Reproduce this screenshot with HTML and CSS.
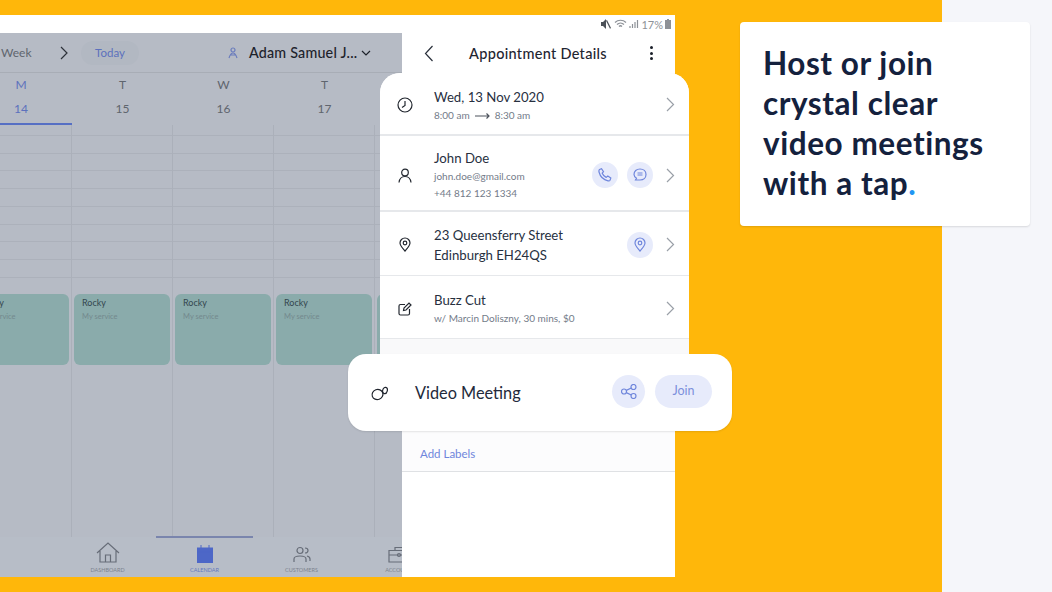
FILE: index.html
```html
<!DOCTYPE html>
<html lang="en">
<head>
<meta charset="utf-8">
<title>Host or join crystal clear video meetings</title>
<link rel="stylesheet" href="styles.css">
</head>
<body>
<div class="stage">
  <main class="phone">
    <section class="calendar">
      <header class="cal-bar">
        <span class="view">Week</span>
        <svg class="next" width="10" height="14" viewBox="0 0 10 14"><path d="M2 1l6 6-6 6"/></svg>
        <span class="today">Today</span>
        <svg class="staff-icon" width="10" height="12" viewBox="0 0 10 12"><circle cx="5" cy="3" r="2"/><path d="M1 11c1-3 2-5 4-5s3 2 4 5M3 8h4"/></svg>
        <span class="staff">Adam Samuel J...</span>
        <svg class="caret" width="10" height="6" viewBox="0 0 10 6"><path d="M1 1l4 4 4-4"/></svg>
      </header>
      <div class="days">
        <div class="day first active"><span>M</span><b>14</b></div>
        <div class="day"><span>T</span><b>15</b></div>
        <div class="day"><span>W</span><b>16</b></div>
        <div class="day"><span>T</span><b>17</b></div>
      </div>
      <div class="grid">
        <div class="col first"><div class="event"><strong>Rocky</strong><small>My service</small></div></div>
        <div class="col"><div class="event"><strong>Rocky</strong><small>My service</small></div></div>
        <div class="col"><div class="event"><strong>Rocky</strong><small>My service</small></div></div>
        <div class="col"><div class="event"><strong>Rocky</strong><small>My service</small></div></div>
        <div class="col last"><div class="event"></div></div>
      </div>
      <nav class="tabs">
        <div class="tab">
          <svg width="24" height="21" viewBox="0 0 24 21"><path d="M1 11L12 1l11 10M4 9v11h16V9M9.500 20v-7h5v7"/></svg>
          <span>DASHBOARD</span>
        </div>
        <div class="tab current">
          <svg width="18" height="18" viewBox="0 0 18 18"><path class="solid" d="M1 2.500h16V18H1z"/><path class="gap" d="M1 7h16M5 0v3M13 0v3"/></svg>
          <span>CALENDAR</span>
        </div>
        <div class="tab">
          <svg width="18" height="17" viewBox="0 0 18 17"><circle cx="7" cy="4.500" r="3"/><path d="M1 16v-3c0-2 2-3 6-3s6 1 6 3v3M12 2c2 0 3 1 3 2.500S14 7 12 7M14 10c2 .5 3 1.500 3 3v2"/></svg>
          <span>CUSTOMERS</span>
        </div>
        <div class="tab">
          <svg width="22" height="17" viewBox="0 0 22 17"><path d="M1 4.500h20V16H1zM7 4.500V1.500h8v3M1 9h20"/><circle cx="11" cy="9" r="1.500"/></svg>
          <span>ACCOUNT</span>
        </div>
      </nav>
    </section>

    <section class="sheet">
      <div class="status">
        <svg class="mute" width="12" height="10" viewBox="0 0 12 10"><path class="fill" d="M1 3h2l3-3v10L3 7H1zM7 1l4 8-1 .8-4-8z"/></svg>
        <svg width="13" height="10" viewBox="0 0 13 10"><path d="M1 3.500c3-3 8-3 11 0M3 5.500c2-2 5-2 7 0M5 7.500c1-1 2-1 3 0"/></svg>
        <svg width="10" height="10" viewBox="0 0 10 10"><path d="M1 9V7M3.500 9V5M6 9V3M8.500 9V1"/></svg>
        <span>17%</span>
        <svg width="6" height="10" viewBox="0 0 6 10"><path class="fill" d="M2 0h2v1h2v9H0V1h2z"/></svg>
      </div>
      <header class="sheet-bar">
        <svg class="back" width="10" height="17" viewBox="0 0 10 17"><path d="M8.500 1L1.500 8.500l7 7.500"/></svg>
        <h1>Appointment Details</h1>
        <div class="dots"><i></i><i></i><i></i></div>
      </header>
      <div class="spacer"></div>
      <div class="labels"><a>Add Labels</a></div>
    </section>
  </main>

  <section class="details">
    <div class="row r1">
      <svg class="lead" width="16" height="16" viewBox="0 0 16 16"><circle cx="8" cy="8" r="7"/><path d="M8 4v4.500l-3 2"/></svg>
      <div class="text">
        <p class="main">Wed, 13 Nov 2020</p>
        <p class="sub">8:00 am <svg class="arrow" width="15" height="6" viewBox="0 0 15 6"><path d="M0 3h14M11.500 .5L14 3l-2.500 2.500"/></svg> 8:30 am</p>
      </div>
      <svg class="chev" width="9" height="15" viewBox="0 0 9 15"><path d="M1 1l6.500 6.500L1 14"/></svg>
    </div>
    <div class="row r2">
      <svg class="lead" width="14" height="15" viewBox="0 0 14 15"><circle cx="7" cy="4.500" r="3.300"/><path d="M1 14.500c.5-4 2.500-6 6-6s5.500 2 6 6"/></svg>
      <div class="text">
        <p class="main">John Doe</p>
        <p class="sub">john.doe@gmail.com</p>
        <p class="sub">+44 812 123 1334</p>
      </div>
      <span class="round"><svg width="14" height="14" viewBox="0 0 14 14"><path d="M1.500 1.500l2-.8 2 3-1.300 1.500c.8 1.800 2.300 3.300 4 4.200l1.600-1.300 3 2-.8 2.100c-.4.700-1.300.8-2 .6C5 11.700 2.300 9 1 4c-.2-1 0-2 .5-2.500z"/></svg></span>
      <span class="round"><svg width="14" height="14" viewBox="0 0 14 14"><path d="M7 1c3.500 0 6 2.300 6 5.500S10.500 12 7 12H2.500l1-1.800C2 9.200 1 8 1 6.500 1 3.300 3.500 1 7 1z"/><path d="M4.500 5h5M4.500 7h5"/></svg></span>
      <svg class="chev" width="9" height="15" viewBox="0 0 9 15"><path d="M1 1l6.500 6.500L1 14"/></svg>
    </div>
    <div class="row r3">
      <svg class="lead" width="12" height="15" viewBox="0 0 12 15"><path d="M6 14C3 10.500 1 8.500 1 6a5 5 0 0110 0c0 2.500-2 4.500-5 8z"/><circle cx="6" cy="6" r="1.800"/></svg>
      <div class="text">
        <p class="main">23 Queensferry Street</p>
        <p class="main">Edinburgh EH24QS</p>
      </div>
      <span class="round"><svg width="12" height="15" viewBox="0 0 12 15"><path d="M6 14C3 10.500 1 8.500 1 6a5 5 0 0110 0c0 2.500-2 4.500-5 8z"/><circle cx="6" cy="6" r="1.800"/></svg></span>
      <svg class="chev" width="9" height="15" viewBox="0 0 9 15"><path d="M1 1l6.500 6.500L1 14"/></svg>
    </div>
    <div class="row r4">
      <svg class="lead" width="14" height="14" viewBox="0 0 14 14"><path d="M7 2.500H2.500A1.500 1.500 0 001 4v7.500A1.500 1.500 0 002.500 13H10a1.500 1.500 0 001.500-1.500V7M5.500 8.500l.5-2.500L11 1l2 2-5 5z"/></svg>
      <div class="text">
        <p class="main">Buzz Cut</p>
        <p class="sub">w/ Marcin Doliszny, 30 mins, $0</p>
      </div>
      <svg class="chev" width="9" height="15" viewBox="0 0 9 15"><path d="M1 1l6.500 6.500L1 14"/></svg>
    </div>
  </section>

  <section class="video">
    <svg class="video-icon" width="18" height="16" viewBox="0 0 18 16"><ellipse cx="7.500" cy="9.500" rx="5.500" ry="5" transform="rotate(-20 7.500 9.500)"/><ellipse cx="15" cy="5.500" rx="2.300" ry="3.200" transform="rotate(15 15 5.500)"/></svg>
    <span class="video-title">Video Meeting</span>
    <span class="round big"><svg width="16" height="15" viewBox="0 0 16 15"><circle cx="3" cy="7.500" r="2.500"/><circle cx="12.500" cy="3" r="2.500"/><circle cx="12.500" cy="12" r="2.500"/><path d="M5.300 6.400l5-2.400M5.300 8.600l5 2.400"/></svg></span>
    <span class="join">Join</span>
  </section>

  <aside class="promo">
    <h2>Host or join<br>crystal clear<br>video meetings<br>with a tap<em>.</em></h2>
  </aside>
</div>
</body>
</html>
```

FILE: styles.css
```css
* { box-sizing: border-box; margin: 0; padding: 0; }
html, body { width: 1052px; height: 592px; overflow: hidden; }
body { font-family: "Lato", "Liberation Sans", sans-serif; background: #ffb70a; }
svg { display: block; fill: none; stroke: currentColor; stroke-width: 1.2; flex: none; }
svg .fill { fill: currentColor; stroke: none; }

.stage {
  position: relative;
  width: 1052px;
  height: 592px;
  padding-top: 15px;
  background: linear-gradient(to right, #ffb70a 942px, #f5f6fa 942px);
  overflow: hidden;
}

/* Phone */
.phone { display: flex; width: 675px; height: 562px; }
.calendar {
  width: 402px;
  display: flex;
  flex-direction: column;
  background: #b6bbc5;
  border-top: 18px solid #fff;
  overflow: hidden;
}
.cal-bar {
  height: 40px;
  flex: none;
  display: flex;
  align-items: center;
  border-bottom: 1px solid #a8adb6;
  color: #5d636c;
  font-size: 13px;
}
.view { margin-left: 1px; width: 58px; font-size: 12px; color: #5f656e; }
.next { color: #2d323a; }
.today {
  margin-left: 12px;
  width: 58px;
  height: 24px;
  border-radius: 12px;
  background: #b2b8c2;
  color: #5c71bd;
  text-align: center;
  line-height: 24px;
  font-size: 11.500px;
}
.staff-icon { margin-left: 89px; color: #6a7cbd; }
.staff { margin-left: 11px; font-size: 14.300px; font-weight: 500; color: #1d222b; white-space: nowrap; letter-spacing: .2px; }
.caret { margin-left: 4px; color: #1d222b; }

.days { height: 52px; flex: none; display: flex; margin-left: -30px; }
.day {
  width: 101px;
  display: flex;
  flex-direction: column;
  align-items: center;
  color: #5f656e;
  font-size: 12px;
}
.day span { height: 24px; line-height: 24px; }
.day b { font-weight: 400; line-height: 24px; }
.day.active { color: #5c71bd; border-bottom: 2px solid #566fc4; }
.day.first { width: 102px; }

.grid { height: 412px; flex: none; display: flex; }
.col {
  width: 101px;
  flex: none;
  padding-top: 169px;
  border-right: 1px solid #abb0ba;
  background: repeating-linear-gradient(to bottom, transparent 0, transparent 16.700px, #acb1bb 16.700px, #acb1bb 17.700px) 0 -6.700px / 100% 169px no-repeat;
}
.col.first { width: 72px; }
.col.last { border-right: 0; flex: 1; }
.event {
  height: 71px;
  margin: 0 2px;
  padding: 2px 8px;
  border-radius: 6px;
  background: #8aabab;
  display: flex;
  flex-direction: column;
  overflow: hidden;
}
.col.first .event { margin-left: -28px; }
.col.last .event { margin-right: -10px; }
.event strong { font-weight: 400; font-size: 9px; line-height: 14px; color: #33464e; white-space: nowrap; }
.event small { font-size: 7.500px; line-height: 13px; color: #73898d; white-space: nowrap; }

.tabs {
  flex: 1;
  display: flex;
  margin-left: -36px;
  background: #b7bdc7;
}
.tab {
  width: 97px;
  flex: none;
  display: flex;
  flex-direction: column;
  align-items: center;
  justify-content: flex-end;
  color: #676d78;
  padding-bottom: 2px;
}
.tab:first-child { margin-left: 95px; }
.tab span { font-size: 5.500px; line-height: 9px; margin-top: 3px; white-space: nowrap; color: #7d838e; }
.tab.current { border-top: 2px solid #7a85ad; margin-top: -1px; color: #4d67c7; }
.tab.current span { color: #6478bd; }
.tab.current svg .solid { fill: #4d67c7; stroke: none; }
.tab.current svg .gap { stroke: #4d67c7; stroke-width: 1; }

/* Sheet */
.sheet { width: 273px; display: flex; flex-direction: column; background: #fff; }
.status {
  height: 18px;
  flex: none;
  display: flex;
  align-items: center;
  justify-content: flex-end;
  gap: 2px;
  padding-right: 4px;
  color: #8d9197;
  font-size: 11px;
}
.status .mute { color: #4c5158; }
.sheet-bar {
  height: 40px;
  flex: none;
  display: flex;
  align-items: center;
  padding: 0 22px;
  color: #1f2531;
}
.sheet-bar h1 { font-size: 14.500px; font-weight: 500; flex: 1; text-align: center; letter-spacing: .3px; padding-right: 8px; }
.back { color: #2a303b; }
.dots { display: flex; flex-direction: column; gap: 2.500px; }
.dots i { display: block; width: 3px; height: 3px; border-radius: 50%; background: #1a1f29; }
.spacer { flex: none; height: 358px; background: #fafafb; }
.labels {
  height: 41px;
  padding: 4px 18px 0;
  display: flex;
  align-items: center;
  border-bottom: 1px solid #dfe1e4;
  background: #fcfcfd;
  color: #6f86dc;
  font-size: 11.500px;
}

/* Overlay: detail card */
.details {
  position: absolute;
  left: 380px;
  top: 73px;
  width: 309px;
  height: 295px;
  border-radius: 20px 20px 0 0;
  background: #f9f9fa;
  overflow: hidden;
}
.row {
  display: flex;
  align-items: center;
  padding: 0 12px 0 17px;
  border-bottom: 1px solid #e6e8eb;
  background: #fff;
  color: #20263a;
}
.r1 { height: 63px; padding-top: 2px; border-bottom-width: 2px; }
.r1 .text { padding-top: 2px; }
.r2 { height: 76px; padding-top: 4px; border-bottom-width: 2px; }
.r3 { height: 64px; padding-top: 2px; }
.r4 { height: 63px; padding-top: 3px; }
.lead { margin-right: 21px; color: #22272f; }
.r2 .lead { margin-left: 1px; margin-right: 22px; }
.r3 .lead { margin-left: 2px; margin-right: 23px; }
.r4 .lead { margin-left: 1px; margin-right: 22px; }
.text { flex: 1; }
.main { font-size: 13.200px; line-height: 20px; color: #27303f; }
.sub {
  font-size: 10px;
  line-height: 17px;
  color: #737b89;
  display: flex;
  align-items: center;
  gap: 5px;
  white-space: nowrap;
}
.arrow { color: #4d535c; }
.chev { color: #9aa0a8; margin-left: 13px; margin-right: 2px; }
.round {
  width: 26px;
  height: 26px;
  border-radius: 50%;
  background: #e7ebfb;
  color: #6f86dc;
  display: flex;
  align-items: center;
  justify-content: center;
  margin-left: 9px;
  flex: none;
}

/* Overlay: video card */
.video {
  position: absolute;
  left: 348px;
  top: 354px;
  width: 384px;
  height: 77px;
  border-radius: 18px;
  background: #fff;
  box-shadow: 0 1px 2px rgba(0,0,0,.1);
  display: flex;
  align-items: center;
  padding: 0 20px 0 22px;
}
.video-icon { color: #1e232c; margin-right: 27px; }
.video-title { flex: 1; font-size: 16.300px; color: #232a3b; }
.round.big { width: 33px; height: 33px; margin: -3px 10px 0 0; }
.join {
  width: 57px;
  height: 33px;
  margin-top: -3px;
  border-radius: 17px;
  background: #e7ebfb;
  color: #7c90dc;
  font-size: 12.500px;
  text-align: center;
  line-height: 31px;
}

/* Overlay: promo card */
.promo {
  position: absolute;
  left: 740px;
  top: 22px;
  width: 290px;
  height: 204px;
  border-radius: 4px;
  background: #fff;
  box-shadow: 0 1px 2px rgba(0,0,0,.12);
  padding: 21px 23px;
}
.promo h2 {
  font-size: 31.500px;
  line-height: 40px;
  font-weight: 700;
  color: #14213d;
  letter-spacing: .55px;
}
.promo em { font-style: normal; color: #2196f3; }
```
